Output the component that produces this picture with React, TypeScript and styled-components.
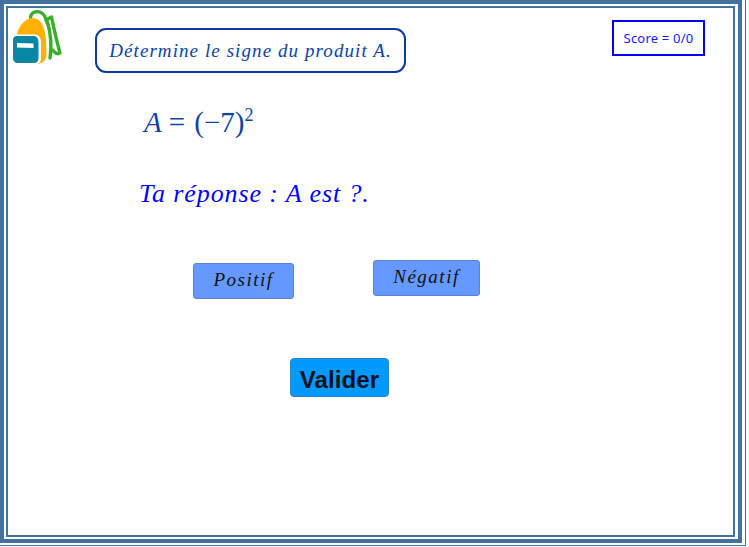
import React from "react";
import styled, { createGlobalStyle } from "styled-components";

const Global = createGlobalStyle`
  html, body { margin: 0; padding: 0; background: #fff; overflow: hidden; }
  * { box-sizing: border-box; }
`;

const FRAME = "#44729f";
const math = `"Liberation Serif", "Times New Roman", serif`;

const OuterFrame = styled.div`
  width: 746px;
  height: 546px;
  border-right: 1px solid ${FRAME};
  border-bottom: 1px solid ${FRAME};
  padding: 0 3px 2px 0;
  display: flex;
`;
const MiddleFrame = styled.div`
  flex: 1;
  border: 4px solid ${FRAME};
  padding: 2px 3px 2px 2px;
  display: flex;
`;
const Stage = styled.main`
  flex: 1;
  border: 2px solid ${FRAME};
  background: #fff;
  display: flex;
  flex-direction: column;
`;
const Header = styled.header`
  display: flex;
  align-items: flex-start;
  padding: 1px 28px 0 4px;
`;
const Logo = styled.svg`
  width: 50px;
  height: 57px;
  flex: none;
`;
const Title = styled.h1`
  margin: 19px 0 0 33px;
  width: 311px;
  height: 45px;
  border: 2px solid #0a3d9e;
  border-radius: 11px;
  display: flex;
  align-items: center;
  justify-content: center;
  color: #0f43a3;
  font: italic 400 19px ${math};
  letter-spacing: 1.08px;
`;
const Score = styled.div`
  margin: 11px 0 0 auto;
  width: 93px;
  height: 36px;
  border: 2px solid #0000ff;
  display: flex;
  align-items: center;
  justify-content: center;
  color: #1a1aff;
  font: 400 13px "Noto Sans", sans-serif;
  letter-spacing: 0.2px;
`;
const Formula = styled.div`
  margin: 29px 0 0 136px;
  height: 40px;
  color: #0f43a3;
  font: 400 29px/40px ${math};
  word-spacing: 2px;
  white-space: nowrap;
`;
const MathVar = styled.i`
  margin-right: 7px;
`;
const Sup = styled.sup`
  font-size: 18px;
  line-height: 0;
  vertical-align: 11px;
`;
const Answer = styled.div`
  margin: 34px 0 0 131px;
  height: 36px;
  color: #0000ff;
  font: italic 400 26px/36px ${math};
  letter-spacing: 0.9px;
  white-space: nowrap;
`;
const Choices = styled.div`
  display: flex;
  align-items: flex-start;
  margin: 48px 0 0 185px;
  gap: 79px;
`;
const Choice = styled.button<{ $w: number; $drop: number }>`
  width: ${(p) => p.$w}px;
  height: 36px;
  margin-top: ${(p) => p.$drop}px;
  padding: 0 0 3px;
  background: #6699ff;
  border: 1px solid #5b84cf;
  border-radius: 3px;
  color: #111;
  font: italic 400 19px ${math};
  letter-spacing: 1.5px;
`;
const Validate = styled.button`
  margin: 59px 0 0 282px;
  width: 99px;
  height: 39px;
  padding: 4px 0 0;
  background: #0099ff;
  border: 1px solid #2a84c4;
  border-radius: 4px;
  color: #07111c;
  font: 700 24px "Liberation Sans", Arial, sans-serif;
  letter-spacing: 0.1px;
`;

const Backpack = () => (
  <Logo viewBox="12 9 50 57" aria-hidden="true">
    <path d="M31 20 C29 13 36 10 41 12.500 C45 14.500 46 18 47 23" fill="none" stroke="#3aae2a" strokeWidth="3.200" strokeLinecap="round" />
    <path d="M46 20 L51.500 17 C54 29 57 42 60 53 C58 54.500 55 53.500 52.500 50" fill="none" stroke="#3aae2a" strokeWidth="3.400" strokeLinejoin="round" strokeLinecap="round" />
    <path d="M47.500 22 C50.500 33 52 46 50 58" fill="none" stroke="#3aae2a" strokeWidth="3.400" strokeLinecap="round" />
    <path d="M17 34 C19 25 26 18 33 18 C41 18 45 28 46 40 L46.500 56 C46 60 43 63 38 64 L30 64 L17 40 Z" fill="#ffb000" />
    <path d="M17 34.500 L35 34.500 C39 34.500 41 38 41 43 L41 58 C41 62 39 64 36 64 L18 64 C14.500 64 13 62 13 59 L13 40 C13 37 14.500 34.500 17 34.500 Z" fill="#fff" />
    <path d="M17 36 L34 36 C37 36 38.500 39 38.500 43 L38.500 58 C38.500 61.500 37 63 34 63 L18 63 C15 63 13 61.500 13 58 L13 40 C13 37.500 14.500 36 17 36 Z" fill="#0a86a5" />
    <path d="M17 43 L33.500 43.500 L33.500 48 L17 47.500 Z" fill="#fff" />
  </Logo>
);

export default function App() {
  return (
    <>
      <Global />
      <OuterFrame>
        <MiddleFrame>
          <Stage>
            <Header>
              <Backpack />
              <Title>Détermine le signe du produit A.</Title>
              <Score>Score = 0/0</Score>
            </Header>
            <Formula>
              <MathVar>A</MathVar>= (−7)<Sup>2</Sup>
            </Formula>
            <Answer>Ta réponse : A est ?.</Answer>
            <Choices>
              <Choice $w={101} $drop={3}>Positif</Choice>
              <Choice $w={107} $drop={0}>Négatif</Choice>
            </Choices>
            <div>
              <Validate>Valider</Validate>
            </div>
          </Stage>
        </MiddleFrame>
      </OuterFrame>
    </>
  );
}
